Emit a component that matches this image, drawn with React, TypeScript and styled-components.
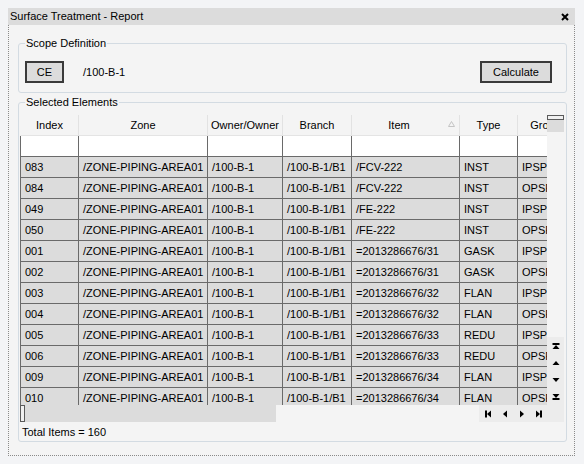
import React from "react";
import styled, { createGlobalStyle } from "styled-components";

const GlobalStyle = createGlobalStyle`
  html, body {
    margin: 0;
    padding: 0;
    background: #f3f4f6;
    font-family: "Liberation Sans", Arial, sans-serif;
    font-size: 11px;
    color: #000;
  }
  * { box-sizing: border-box; }
`;

const Page = styled.div`
  padding: 8px;
`;

const Window = styled.div`
  width: 567px;
  display: flex;
  flex-direction: column;
`;

const TitleBar = styled.div`
  height: 17px;
  background: #dcdcdc;
  display: flex;
  align-items: center;
  justify-content: space-between;
  padding: 0 6px 0 2px;
  line-height: 17px;
`;

const CloseIcon = styled.svg`
  display: block;
  width: 8px;
  height: 8px;
`;

const Body = styled.div`
  height: 431px;
  background: #f4f4f4;
  border: 1px dotted #8a8a8a;
  border-top: none;
  padding: 11px 7px 0 9px;
  display: flex;
  flex-direction: column;
`;

const Group = styled.fieldset<{ $mt?: number }>`
  margin: ${(p) => p.$mt ?? 0}px 0 0 0;
  padding: 0;
  border: 1px solid #d3dbe2;
  border-radius: 3px;
  min-width: 0;
`;

const Legend = styled.legend`
  margin-left: 6px;
  padding: 0 1px;
  line-height: 14px;
  font-size: 11px;
`;

const ScopeRow = styled.div`
  display: flex;
  align-items: center;
  padding: 11px 14px 9px 6px;
`;

const Button = styled.button<{ $w: number }>`
  width: ${(p) => p.$w}px;
  height: 22px;
  padding: 0;
  border: 2px solid #3a3a3a;
  background: #dcdcdc;
  font-family: "Liberation Sans", Arial, sans-serif;
  font-size: 11px;
  color: #000;
`;

const PathText = styled.span`
  margin-left: 19px;
  margin-right: auto;
`;

const ElementsBody = styled.div`
  padding: 6px 0 2px 1px;
`;

const GridArea = styled.div`
  display: grid;
  grid-template-columns: 527px 17px;
  grid-template-rows: 290px 17px;
  width: 544px;
`;

const Viewport = styled.div`
  overflow: hidden;
  display: flex;
  flex-direction: column;
`;

const COLS = "58px 129px 75px 69px 108px 58px 56px";

const Row = styled.div<{ $kind: "header" | "filter" | "data" }>`
  display: grid;
  grid-template-columns: ${COLS};
  flex: none;
  height: 21px;
  border-left: 1px solid ${(p) => (p.$kind === "header" ? "transparent" : "#6a6a6a")};
  border-bottom: 1px solid ${(p) => (p.$kind === "header" ? "#e4e4e4" : "#6a6a6a")};
  background: ${(p) =>
    p.$kind === "header" ? "#f4f4f4" : p.$kind === "filter" ? "#ffffff" : "#dcdcdc"};
`;

const Cell = styled.div<{ $head?: boolean }>`
  position: relative;
  height: 20px;
  line-height: 20px;
  border-right: 1px solid ${(p) => (p.$head ? "#e2e2e2" : "#6a6a6a")};
  padding-left: ${(p) => (p.$head ? 0 : 4)}px;
  text-align: ${(p) => (p.$head ? "center" : "left")};
  white-space: nowrap;
  overflow: hidden;
`;

const HeadLabel = styled.span<{ $pr?: number }>`
  display: block;
  padding-right: ${(p) => p.$pr ?? 0}px;
`;

const SortGlyph = styled.svg`
  position: absolute;
  top: 6px;
  right: 4px;
  width: 7px;
  height: 6px;
`;

const VScroll = styled.div`
  display: flex;
  flex-direction: column;
`;

const VTrack = styled.div`
  height: 17px;
  background: #dcdcdc;
`;

const VThumb = styled.div`
  height: 5px;
  border: 1px solid #5a5a5a;
  background: #f0f0f0;
`;

const Spacer = styled.div`
  flex: 1;
`;

const NavGroup = styled.div<{ $dir: "row" | "column" }>`
  display: flex;
  flex-direction: ${(p) => p.$dir};
  background: #ececec;
`;

const NavButton = styled.div`
  width: 17px;
  height: 17px;
  display: flex;
  align-items: center;
  justify-content: center;
`;

const HScroll = styled.div`
  display: flex;
`;

const HTrack = styled.div`
  width: 256px;
  background: #dcdcdc;
`;

const HThumb = styled.div`
  width: 5px;
  height: 17px;
  border: 1px solid #5a5a5a;
  background: #f0f0f0;
`;

const Corner = styled.div`
  background: #ececec;
`;

const Total = styled.div`
  margin-top: 4px;
  padding-left: 2px;
  line-height: 13px;
`;

const IconSvg = styled.svg<{ $t: string }>`
  display: block;
  width: 8px;
  height: 8px;
  transform: ${(p) => p.$t};
`;

type NavKind = "first" | "prev" | "next" | "last" | "top" | "up" | "down" | "bottom";

const NavIcon: React.FC<{ kind: NavKind }> = ({ kind }) => {
  const withBar = kind === "first" || kind === "last" || kind === "top" || kind === "bottom";
  const t: Record<NavKind, string> = {
    first: "none",
    prev: "none",
    next: "scaleX(-1)",
    last: "scaleX(-1)",
    top: "rotate(90deg)",
    up: "rotate(90deg)",
    down: "rotate(-90deg)",
    bottom: "rotate(-90deg)",
  };
  return (
    <IconSvg $t={t[kind]} viewBox="0 0 8 8">
      {withBar ? (
        <>
          <rect x="1" y="0.5" width="2" height="7" fill="#000" />
          <polygon points="7,0.5 7,7.5 3,4" fill="#000" />
        </>
      ) : (
        <polygon points="6,0.5 6,7.5 2,4" fill="#000" />
      )}
    </IconSvg>
  );
};

const rows: string[][] = [
  ["083", "/FCV-222", "INST", "IPSPEC"],
  ["084", "/FCV-222", "INST", "OPSPEC"],
  ["049", "/FE-222", "INST", "IPSPEC"],
  ["050", "/FE-222", "INST", "OPSPEC"],
  ["001", "=2013286676/31", "GASK", "IPSPEC"],
  ["002", "=2013286676/31", "GASK", "OPSPEC"],
  ["003", "=2013286676/32", "FLAN", "IPSPEC"],
  ["004", "=2013286676/32", "FLAN", "OPSPEC"],
  ["005", "=2013286676/33", "REDU", "IPSPEC"],
  ["006", "=2013286676/33", "REDU", "OPSPEC"],
  ["009", "=2013286676/34", "FLAN", "IPSPEC"],
  ["010", "=2013286676/34", "FLAN", "OPSPEC"],
];

const headers = ["Index", "Zone", "Owner/Owner", "Branch", "Item", "Type", "Group"];

export default function App() {
  return (
    <>
      <GlobalStyle />
      <Page>
        <Window>
          <TitleBar>
            <span>Surface Treatment - Report</span>
            <CloseIcon viewBox="0 0 8 8">
              <path d="M1 1 L7 7 M7 1 L1 7" stroke="#000" strokeWidth="2" />
            </CloseIcon>
          </TitleBar>
          <Body>
            <Group>
              <Legend>Scope Definition</Legend>
              <ScopeRow>
                <Button $w={39}>CE</Button>
                <PathText>/100-B-1</PathText>
                <Button $w={72}>Calculate</Button>
              </ScopeRow>
            </Group>
            <Group $mt={2}>
              <Legend>Selected Elements</Legend>
              <ElementsBody>
                <GridArea>
                  <Viewport>
                    <Row $kind="header">
                      {headers.map((h) => (
                        <Cell $head key={h}>
                          <HeadLabel $pr={h === "Item" ? 13 : 0}>{h}</HeadLabel>
                          {h === "Item" && (
                            <SortGlyph viewBox="0 0 7 6">
                              <polygon points="3.5,0.5 6.5,5.5 0.5,5.5" fill="none" stroke="#c4c4c4" strokeWidth="1" />
                            </SortGlyph>
                          )}
                        </Cell>
                      ))}
                    </Row>
                    <Row $kind="filter">
                      {headers.map((h) => (
                        <Cell key={h} />
                      ))}
                    </Row>
                    {rows.map((r) => (
                      <Row $kind="data" key={r[0]}>
                        <Cell>{r[0]}</Cell>
                        <Cell>/ZONE-PIPING-AREA01</Cell>
                        <Cell>/100-B-1</Cell>
                        <Cell>/100-B-1/B1</Cell>
                        <Cell>{r[1]}</Cell>
                        <Cell>{r[2]}</Cell>
                        <Cell>{r[3]}</Cell>
                      </Row>
                    ))}
                  </Viewport>
                  <VScroll>
                    <VTrack>
                      <VThumb />
                    </VTrack>
                    <Spacer />
                    <NavGroup $dir="column">
                      <NavButton><NavIcon kind="top" /></NavButton>
                      <NavButton><NavIcon kind="up" /></NavButton>
                      <NavButton><NavIcon kind="down" /></NavButton>
                      <NavButton><NavIcon kind="bottom" /></NavButton>
                    </NavGroup>
                  </VScroll>
                  <HScroll>
                    <HTrack>
                      <HThumb />
                    </HTrack>
                    <Spacer />
                    <NavGroup $dir="row">
                      <NavButton><NavIcon kind="first" /></NavButton>
                      <NavButton><NavIcon kind="prev" /></NavButton>
                      <NavButton><NavIcon kind="next" /></NavButton>
                      <NavButton><NavIcon kind="last" /></NavButton>
                    </NavGroup>
                  </HScroll>
                  <Corner />
                </GridArea>
                <Total>Total Items = 160</Total>
              </ElementsBody>
            </Group>
          </Body>
        </Window>
      </Page>
    </>
  );
}
